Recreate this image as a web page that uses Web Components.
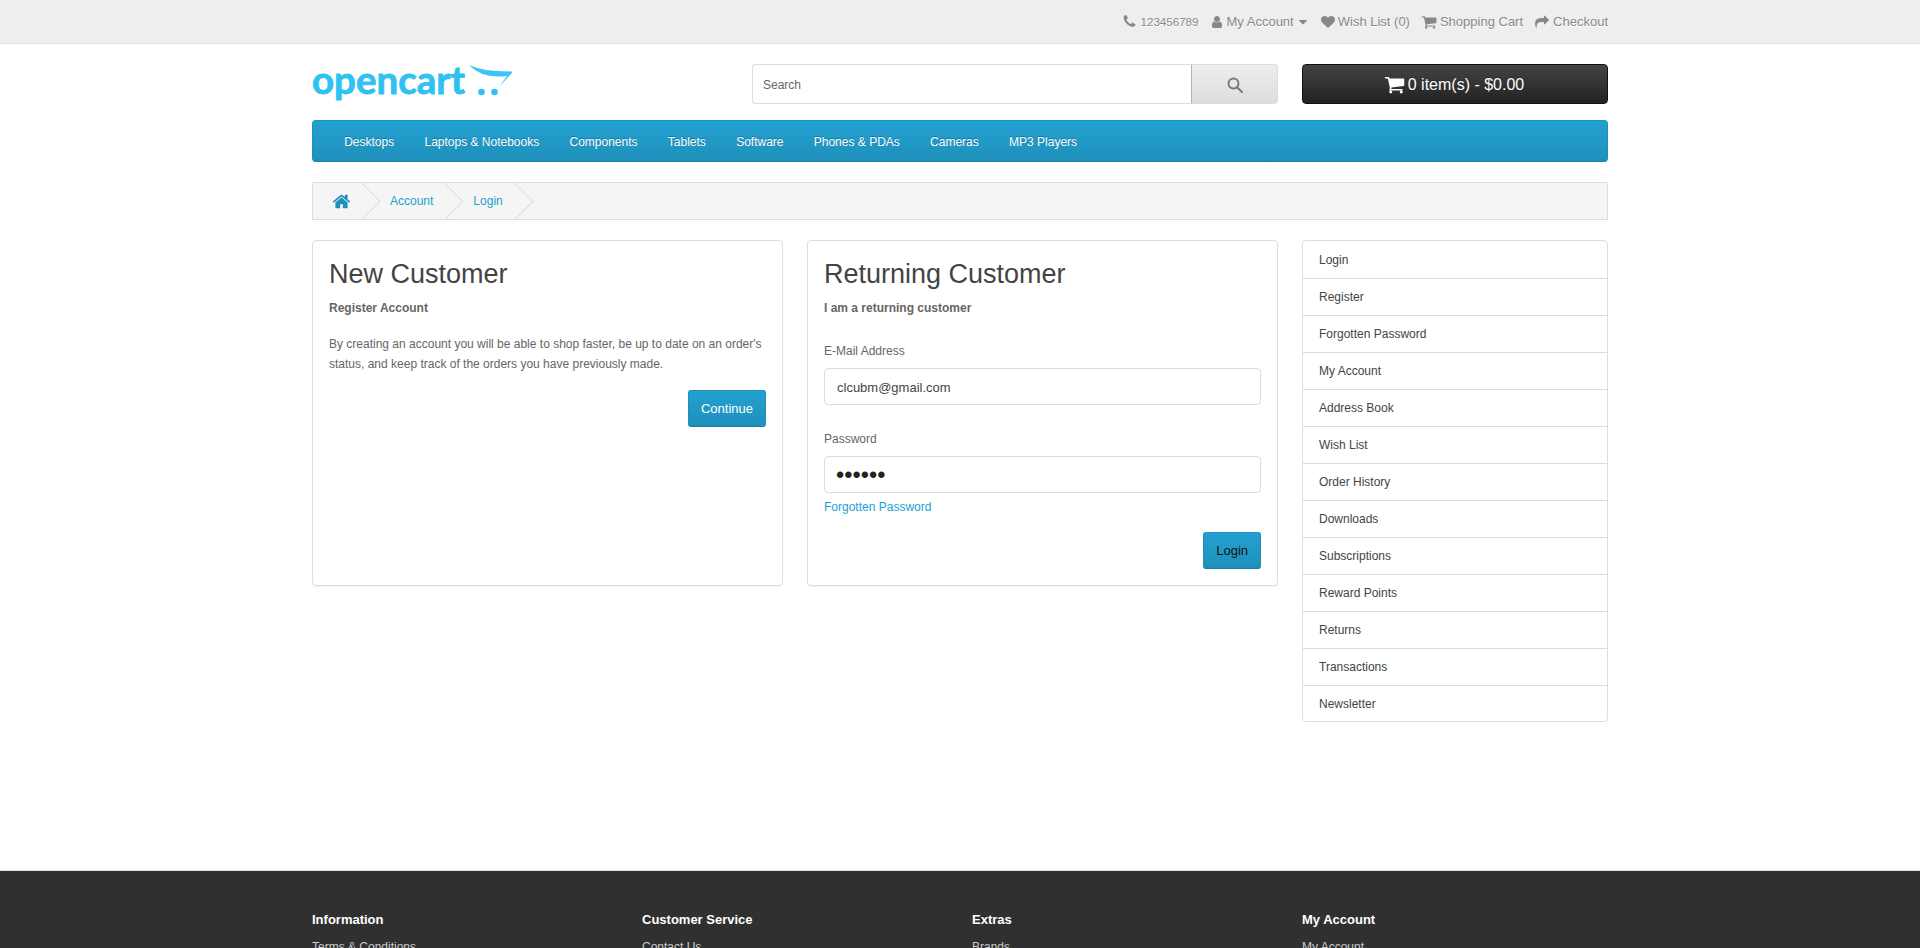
<!DOCTYPE html>
<html lang="en">
<head>
<meta charset="utf-8">
<title>Account Login</title>
<style>
  html, body { height: 100%; overflow: hidden; }
  body { margin: 0; background: #fff; color: #666; font: 12px/20px "Liberation Sans", Arial, sans-serif; }
  page-shell { height: 948px; }
</style>
</head>
<body>
<page-shell>
  <top-bar></top-bar>
  <site-header></site-header>
  <main-menu></main-menu>
  <bread-crumb></bread-crumb>
  <panel-row slot="content">
    <customer-panel heading="New Customer" sub="Register Account">
      <p>By creating an account you will be able to shop faster, be up to date on an order's status, and keep track of the orders you have previously made.</p>
      <blue-button slot="action">Continue</blue-button>
    </customer-panel>
    <customer-panel heading="Returning Customer" sub="I am a returning customer">
      <login-form></login-form>
      <blue-button slot="action" dark>Login</blue-button>
    </customer-panel>
  </panel-row>
  <side-list slot="side"></side-list>
  <site-footer slot="footer"></site-footer>
</page-shell>

<script>
const ICONS = {
  phone: 'M1600 1240q0 27-10 70.5t-21 68.5q-21 50-122 106-94 51-186 51-27 0-53-3.5t-57.5-12.5-47-14.5-55.5-20.5-49-18q-98-35-175-83-127-79-264-216t-216-264q-48-77-83-175-3-9-18-49t-20.5-55.5-14.5-47-12.5-57.5-3.5-53q0-92 51-186 56-101 106-122 25-11 68.5-21t70.5-10q14 0 21 3 18 6 53 76 11 19 30 54t35 63.5 31 53.5q3 4 17.5 25t21.5 35.5 7 28.5q0 20-28.5 50t-62 55-62 53-28.5 46q0 9 5 22.5t8.5 20.5 14 24 11.5 19q76 137 174 235t235 174q2 1 19 11.5t24 14 20.5 8.5 22.5 5q18 0 46-28.5t53-62 55-62 50-28.5q14 0 28.5 7t35.5 21.5 25 17.5q25 15 53.5 31t63.5 35 54 30q70 35 76 53 3 7 3 21z',
  user: 'M1536 1399q0 109-62.5 187t-150.5 78h-854q-88 0-150.5-78t-62.5-187q0-85 8.5-160.5t31.5-152 58.5-131 94-89 134.5-34.5q131 128 313 128t313-128q76 0 134.5 34.5t94 89 58.5 131 31.5 152 8.5 160.5zm-256-887q0 159-112.5 271.5t-271.5 112.5-271.5-112.5-112.5-271.5 112.5-271.5 271.5-112.5 271.5 112.5 112.5 271.5z',
  caret: 'M1408 704q0 26-19 45l-448 448q-19 19-45 19t-45-19l-448-448q-19-19-19-45t19-45 45-19h896q26 0 45 19t19 45z',
  heart: 'M896 1664q-26 0-44-18l-624-602q-10-8-27.5-26t-55.5-65.5-68-97.5-53.5-121-23.5-138q0-220 127-344t351-124q62 0 126.5 21.5t120 58 95.5 68.5 76 68q36-36 76-68t95.5-68.5 120-58 126.5-21.5q224 0 351 124t127 344q0 221-229 450l-623 600q-18 18-44 18z',
  cart: 'M704 1536q0 52-38 90t-90 38-90-38-38-90 38-90 90-38 90 38 38 90zm896 0q0 52-38 90t-90 38-90-38-38-90 38-90 90-38 90 38 38 90zm128-1088v512q0 24-16.5 42.5t-40.5 21.5l-1044 122q13 60 13 70 0 16-24 64h920q26 0 45 19t19 45-19 45-45 19h-1024q-26 0-45-19t-19-45q0-11 8-31.5t16-36 21.5-40 15.5-29.5l-177-823h-204q-26 0-45-19t-19-45 19-45 45-19h256q16 0 28.5 6.5t19.5 15.5 13 24.5 8 26 5.5 29.5 4.5 26h1201q26 0 45 19t19 45z',
  share: 'M1792 640q0 26-19 45l-512 512q-19 19-45 19t-45-19-19-45v-256h-224q-98 0-175.5 6t-154 21.5-133 42.5-105.5 69.5-80 101-48.5 138.5-17.5 181q0 55 5 123 0 6 2.5 23.5t2.5 26.5q0 15-8.5 25t-23.5 10q-16 0-28-17-7-9-13-22t-13.5-30-10.5-24q-127-285-127-451 0-199 53-333 162-403 875-403h224v-256q0-26 19-45t45-19 45 19l512 512q19 19 19 45z',
  home: 'M1472 992v480q0 26-19 45t-45 19h-384v-384h-256v384h-384q-26 0-45-19t-19-45v-480q0-1 .5-3t.5-3l575-474 575 474q1 2 1 6zm223-69l-62 74q-8 9-21 11h-3q-13 0-21-7l-692-577-692 577q-12 8-24 7-13-2-21-11l-62-74q-8-10-7-23.5t11-21.5l719-599q32-26 76-26t76 26l244 204v-195q0-14 9-23t23-9h192q14 0 23 9t9 23v408l219 182q10 8 11 21.5t-7 23.5z'
};

// small helper, every element below just sets its shadow html once
class ShadowElement extends HTMLElement {
  constructor() {
    super();
    this._root = this.attachShadow({mode: 'open'});
  }
  connectedCallback() {
    this._root.innerHTML = this.markup();
  }
}

class AppIcon extends ShadowElement {
  markup() {
    const size = this.getAttribute('size') || 14;
    const name = this.getAttribute('name');
    return `
    <style>
      :host { display: inline-flex; flex: none; }
      svg { display: block; fill: currentColor; }
    </style>
    <svg width="${size}" height="${size}" viewBox="0 0 1792 1792"><path d="${ICONS[name]}"/></svg>`;
  }
}

class PageShell extends ShadowElement {
  markup() {
    return `
    <style>
      :host { display: flex; flex-direction: column; overflow: hidden; }
      ::slotted(*) { flex: none; }
      .columns { display: flex; gap: 24px; width: 1296px; margin: 0 auto; height: 630px; flex: none; }
      .content { flex: none; width: 966px; }
      .side { flex: none; width: 306px; }
    </style>
    <slot></slot>
    <div class="columns">
      <div class="content"><slot name="content"></slot></div>
      <div class="side"><slot name="side"></slot></div>
    </div>
    <slot name="footer"></slot>`;
  }
}

class PanelRow extends ShadowElement {
  markup() {
    return `
    <style>
      :host { display: flex; gap: 24px; }
    </style>
    <slot></slot>`;
  }
}

class TopBar extends ShadowElement {
  markup() {
    return `
    <style>
      :host { display: block; background: #eee; border-bottom: 1px solid #e2e2e2; color: #888; font-size: 13px; }
      .inner { width: 1296px; height: 43px; margin: 0 auto; display: flex; justify-content: flex-end; align-items: center; gap: 11px; text-shadow: 0 1px 0 #fff; }
      .item { display: flex; align-items: center; gap: 3px; white-space: nowrap; }
      .phone { font-size: 11.6px; }
      .checkout { gap: 4px; }
      .shopping { margin-right: 1px; }
    </style>
    <div class="inner">
      <span class="item phone"><app-icon name="phone" size="15"></app-icon>123456789</span>
      <span class="item"><app-icon name="user" size="14"></app-icon>My Account<app-icon name="caret" size="14" style="margin-left:-1px"></app-icon></span>
      <span class="item"><app-icon name="heart" size="14"></app-icon>Wish List (0)</span>
      <span class="item shopping"><app-icon name="cart" size="16"></app-icon>Shopping Cart</span>
      <span class="item checkout"><app-icon name="share" size="14"></app-icon>Checkout</span>
    </div>`;
  }
}

class SiteLogo extends ShadowElement {
  markup() {
    return `
    <style>
      :host { display: block; width: 202px; height: 40px; }
      svg { display: block; overflow: visible; }
      text { font: 700 38px Lato, "Open Sans", sans-serif; fill: #2fc1f1; stroke: #2fc1f1; stroke-width: .8; stroke-linejoin: round; }
    </style>
    <svg width="202" height="40" viewBox="0 0 202 40">
      <text x="0" y="30" textLength="153" lengthAdjust="spacingAndGlyphs">opencart</text>
      <path d="M157 1Q172 8 200 7.500Q201 8 199 10L187 23L195 12Q170 15 157 1Z" fill="#3cc5f2"/>
      <circle cx="169.500" cy="28" r="3.300" fill="#2fc1f1"/>
      <circle cx="182.500" cy="28" r="3.300" fill="#2fc1f1"/>
    </svg>`;
  }
}

class SearchBox extends ShadowElement {
  markup() {
    return `
    <style>
      :host { display: flex; width: 526px; height: 40px; }
      input { box-sizing: border-box; flex: 1; min-width: 0; height: 40px; padding: 1px 10px 0; border: 1px solid #ddd; border-right: 0; border-radius: 4px 0 0 4px; font: 12px "Liberation Sans", Arial, sans-serif; color: #555; outline: 0; }
      input::placeholder { color: #666; opacity: 1; }
      button { box-sizing: border-box; width: 87px; height: 40px; padding: 2px 0 0; display: flex; align-items: center; justify-content: center; color: #777; border: 1px solid #ddd; border-left-color: #b5b5b5; border-radius: 0 4px 4px 0; background: linear-gradient(#eee, #ddd); }
      svg { display: block; fill: none; stroke: currentColor; stroke-width: 1.9; }
    </style>
    <input type="text" placeholder="Search">
    <button type="button">
      <svg width="16" height="16" viewBox="0 0 16 16"><circle cx="6.500" cy="6.500" r="5"/><path d="M10 10.200L15 15" stroke-linecap="round"/></svg>
    </button>`;
  }
}

class CartButton extends ShadowElement {
  markup() {
    return `
    <style>
      :host { display: flex; box-sizing: border-box; width: 306px; height: 40px; padding: 1px 2px 0 0; align-items: center; justify-content: center; gap: 3px; color: #fff; font-size: 16px; border: 1px solid #111; border-radius: 4px; background: linear-gradient(#444, #222); text-shadow: 0 -1px 0 rgba(0,0,0,.25); }
    </style>
    <app-icon name="cart" size="21"></app-icon><span>0 item(s) - $0.00</span>`;
  }
}

class SiteHeader extends ShadowElement {
  markup() {
    return `
    <style>
      :host { display: flex; width: 1296px; margin: 20px auto 16px; align-items: center; justify-content: space-between; }
      search-box { margin-left: 238px; }
      .cart { margin-left: 24px; }
    </style>
    <site-logo></site-logo>
    <search-box></search-box>
    <cart-button class="cart"></cart-button>`;
  }
}

class MainMenu extends ShadowElement {
  markup() {
    const items = ['Desktops', 'Laptops &amp; Notebooks', 'Components', 'Tablets', 'Software', 'Phones &amp; PDAs', 'Cameras', 'MP3 Players'];
    return `
    <style>
      :host { display: flex; box-sizing: border-box; width: 1296px; height: 42px; margin: 0 auto 20px; padding: 2px 16px 0; align-items: center; color: #fff; background: linear-gradient(#23a1d1, #1f90bb); border: 1px solid #1f90bb; border-bottom-color: #1a7fa5; border-radius: 4px; text-shadow: 0 -1px 0 rgba(0,0,0,.25); }
      a { padding: 0 15.15px; white-space: nowrap; }
    </style>
    ${items.map((label) => `<a>${label}</a>`).join('')}`;
  }
}

class BreadCrumb extends ShadowElement {
  markup() {
    return `
    <style>
      :host { display: flex; box-sizing: border-box; width: 1296px; height: 38px; margin: 0 auto 20px; align-items: center; overflow: hidden; background: #f5f5f5; border: 1px solid #ddd; color: #23a1d1; }
      a { position: relative; display: flex; align-items: center; height: 36px; padding: 0 20px; }
      a.home { padding: 0 19px; }
      a::after { content: ''; position: absolute; top: 5px; right: -5px; width: 26px; height: 26px; border-right: 1px solid #ddd; border-bottom: 1px solid #ddd; transform: rotate(-45deg); }
    </style>
    <a class="home"><app-icon name="home" size="19" style="color:#1f90bb"></app-icon></a><a>Account</a><a>Login</a>`;
  }
}

class CustomerPanel extends ShadowElement {
  markup() {
    return `
    <style>
      :host { display: flex; flex-direction: column; box-sizing: border-box; width: 471px; height: 346px; padding: 16px; border: 1px solid #ddd; border-radius: 4px; box-shadow: 0 1px 1px rgba(0,0,0,.05); }
      h2 { margin: 0; padding-top: 1px; font-size: 27px; line-height: 32px; font-weight: 400; color: #444; }
      .sub { margin: 8px 0 0; font-weight: 700; }
      .body { margin-top: 16px; }
      .action { display: flex; justify-content: flex-end; }
      ::slotted(p) { margin: 0 0 16px; }
    </style>
    <h2>${this.getAttribute('heading')}</h2>
    <p class="sub">${this.getAttribute('sub')}</p>
    <div class="body"><slot></slot></div>
    <div class="action"><slot name="action"></slot></div>`;
  }
}

class LoginForm extends ShadowElement {
  markup() {
    return `
    <style>
      :host { display: block; padding-top: 7px; }
      label { display: block; margin-bottom: 7px; }
      input { box-sizing: border-box; display: block; width: 100%; height: 37px; padding: 2px 12px 0; border: 1px solid #ddd; border-radius: 4px; color: #444; font: 13px "Liberation Sans", Arial, sans-serif; outline: 0; }
      input[type=password] { font-size: 23.5px; color: #222; padding-left: 11px; }
      .group { margin-bottom: 24px; }
      .last { margin-bottom: 0; }
      a { display: block; margin-top: 4px; margin-bottom: 15px; color: #23a1d1; }
    </style>
    <div class="group">
      <label>E-Mail Address</label>
      <input type="text" value="clcubm@gmail.com">
    </div>
    <div class="group last">
      <label>Password</label>
      <input type="password" value="secret">
      <a>Forgotten Password</a>
    </div>`;
  }
}

class BlueButton extends ShadowElement {
  markup() {
    const color = this.hasAttribute('dark') ? '#111' : '#fff';
    return `
    <style>
      :host { display: inline-flex; box-sizing: border-box; height: 37px; padding: 0 12px; align-items: center; font-size: 13px; color: ${color}; background: linear-gradient(#23a1d1, #1f90bb); border: 1px solid #1f90bb; border-bottom-color: #1a7fa5; border-radius: 3px; }
    </style>
    <slot></slot>`;
  }
}

class SideList extends ShadowElement {
  markup() {
    const items = ['Login', 'Register', 'Forgotten Password', 'My Account', 'Address Book', 'Wish List', 'Order History', 'Downloads', 'Subscriptions', 'Reward Points', 'Returns', 'Transactions', 'Newsletter'];
    return `
    <style>
      :host { display: block; box-sizing: border-box; border: 1px solid #ddd; border-radius: 4px; color: #444; }
      a { display: flex; box-sizing: border-box; height: 37px; padding: 0 16px; align-items: center; }
      a:first-child, a:last-child { height: 36px; }
      a + a { border-top: 1px solid #ddd; }
    </style>
    ${items.map((label) => `<a>${label}</a>`).join('')}`;
  }
}

class SiteFooter extends ShadowElement {
  markup() {
    const columns = [['Information', 'Terms &amp; Conditions'], ['Customer Service', 'Contact Us'], ['Extras', 'Brands'], ['My Account', 'My Account']];
    return `
    <style>
      :host { display: block; flex: 1 !important; background: #303030; border-top: 1px solid #ddd; color: #ccc; }
      .inner { display: grid; grid-template-columns: repeat(4, 330px); width: 1296px; margin: 0 auto; padding-top: 39px; }
      h5 { margin: 0 0 7px; font-size: 13px; line-height: 20px; font-weight: 700; color: #fff; }
    </style>
    <div class="inner">
      ${columns.map(([title, link]) => `<div><h5>${title}</h5><a>${link}</a></div>`).join('')}
    </div>`;
  }
}

window.customElements.define('app-icon', AppIcon);
window.customElements.define('page-shell', PageShell);
window.customElements.define('panel-row', PanelRow);
window.customElements.define('top-bar', TopBar);
window.customElements.define('site-logo', SiteLogo);
window.customElements.define('search-box', SearchBox);
window.customElements.define('cart-button', CartButton);
window.customElements.define('site-header', SiteHeader);
window.customElements.define('main-menu', MainMenu);
window.customElements.define('bread-crumb', BreadCrumb);
window.customElements.define('customer-panel', CustomerPanel);
window.customElements.define('login-form', LoginForm);
window.customElements.define('blue-button', BlueButton);
window.customElements.define('side-list', SideList);
window.customElements.define('site-footer', SiteFooter);
</script>
</body>
</html>
